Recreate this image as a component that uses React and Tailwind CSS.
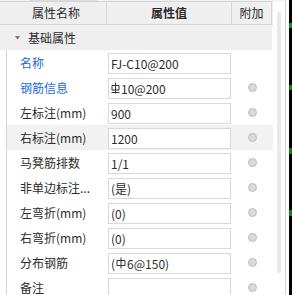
import React from 'react';

const HrbMark = () => (
  <svg width="9" height="12" viewBox="0 0 9 12" className="inline-block mr-[1px] -mt-[2px]">
    <path d="M4.5 0.5V11.5M1 3.5H8V8H1Z M0.5 10.5H8.5" fill="none" stroke="#333" strokeWidth="1" />
  </svg>
);

const HpbMark = () => (
  <svg width="10" height="12" viewBox="0 0 10 12" className="inline-block mx-[1px] -mt-[2px]">
    <path d="M5 0.5V11.5M1 3.5H9V8.5H1Z" fill="none" stroke="#333" strokeWidth="1" />
  </svg>
);

const rows = [
  { label: '名称', value: 'FJ-C10@200', blue: true, dot: false },
  { label: '钢筋信息', value: <><HrbMark />10@200</>, blue: true, dot: true },
  { label: '左标注(mm)', value: '900', dot: true },
  { label: '右标注(mm)', value: '1200', dot: true, active: true },
  { label: '马凳筋排数', value: '1/1', dot: true },
  { label: '非单边标注...', value: '(是)', dot: true },
  { label: '左弯折(mm)', value: '(0)', dot: true },
  { label: '右弯折(mm)', value: '(0)', dot: true },
  { label: '分布钢筋', value: <>(<HpbMark />6@150)</>, dot: true },
  { label: '备注', value: '', dot: true },
];

const PropertyRow = ({ row }) => (
  <div className="flex h-[25px]">
    <div className="w-[7px] border-r border-[#d6d6d6] bg-white" />
    <div className={`flex flex-1 ${row.active ? 'bg-[#f2f2f2]' : 'bg-white'}`}>
      <div
        className={`w-[100px] pl-[13px] flex items-center whitespace-nowrap ${
          row.blue ? 'text-[#2468d8]' : 'text-[#2b2b2b]'
        }`}
      >
        {row.label}
      </div>
      <div className="w-[125px] pl-[1px] pt-[3px]">
        <div className="w-[123px] h-[21px] bg-white border border-[#d9d9d9] pl-[2px] flex items-center text-[#2b2b2b] whitespace-nowrap overflow-hidden">
          {row.value}
        </div>
      </div>
      <div className="w-[40px] flex items-center justify-center">
        {row.dot && (
          <div className="w-[9px] h-[9px] rounded-full bg-[#dadada] border border-[#bdbdbd]" />
        )}
      </div>
    </div>
  </div>
);

const App = () => {
  return (
    <div
      className="w-[292px] h-[295px] overflow-hidden flex bg-white text-[12px] leading-none"
      style={{ fontFamily: '"Microsoft YaHei", "Noto Sans CJK SC", "Noto Sans", sans-serif' }}
    >
      <div className="w-[285px] flex flex-col">
        <div className="h-[4px] flex bg-[#f0f0f0]">
          <div className="ml-[30px] w-[67px] bg-white border-x border-b border-[#dcdcdc]" />
        </div>
        <div className="flex flex-1">
          <div className="w-[273px] flex flex-col">
            <div className="flex h-[24px] bg-[#efefef] border-y border-[#d6d6d6] text-[#2b2b2b]">
              <div className="w-[107px] flex items-center justify-center pl-[6px] border-r border-[#d6d6d6]">
                属性名称
              </div>
              <div className="w-[125px] flex items-center justify-center font-bold border-r border-[#d6d6d6]">
                属性值
              </div>
              <div className="w-[40px] flex items-center justify-center border-r border-[#d6d6d6]">
                附加
              </div>
            </div>
            <div className="flex items-center h-[25px] w-[272px] bg-[#efefef] text-[#2b2b2b]">
              <svg width="5" height="4" viewBox="0 0 5 4" className="ml-[15px] mr-[8px]">
                <path d="M0 0H5L2.5 3.5Z" fill="#7a7a7a" />
              </svg>
              基础属性
            </div>
            {rows.map((row) => (
              <PropertyRow key={row.label} row={row} />
            ))}
          </div>
          <div className="flex-1 pl-[4px] pt-[11px]">
            <div className="w-[4px] h-[261px] bg-[#e9e9e9] rounded-[2px]" />
          </div>
        </div>
      </div>
      <div className="w-[1px] bg-[#d4d4d4]" />
      <div className="w-[3px] bg-white" />
      <div className="flex-1 bg-black flex flex-col">
        <div className="h-[23px]" />
        <div className="h-[5px] bg-[#1f8a1f]" />
        <div className="h-[57px]" />
        <div className="h-[5px] bg-[#1a7a1a]" />
        <div className="h-[58px]" />
        <div className="h-[6px] bg-[#1a7a1a]" />
        <div className="h-[56px]" />
        <div className="h-[6px] bg-[#1a7a1a]" />
      </div>
    </div>
  );
};

export default App;
